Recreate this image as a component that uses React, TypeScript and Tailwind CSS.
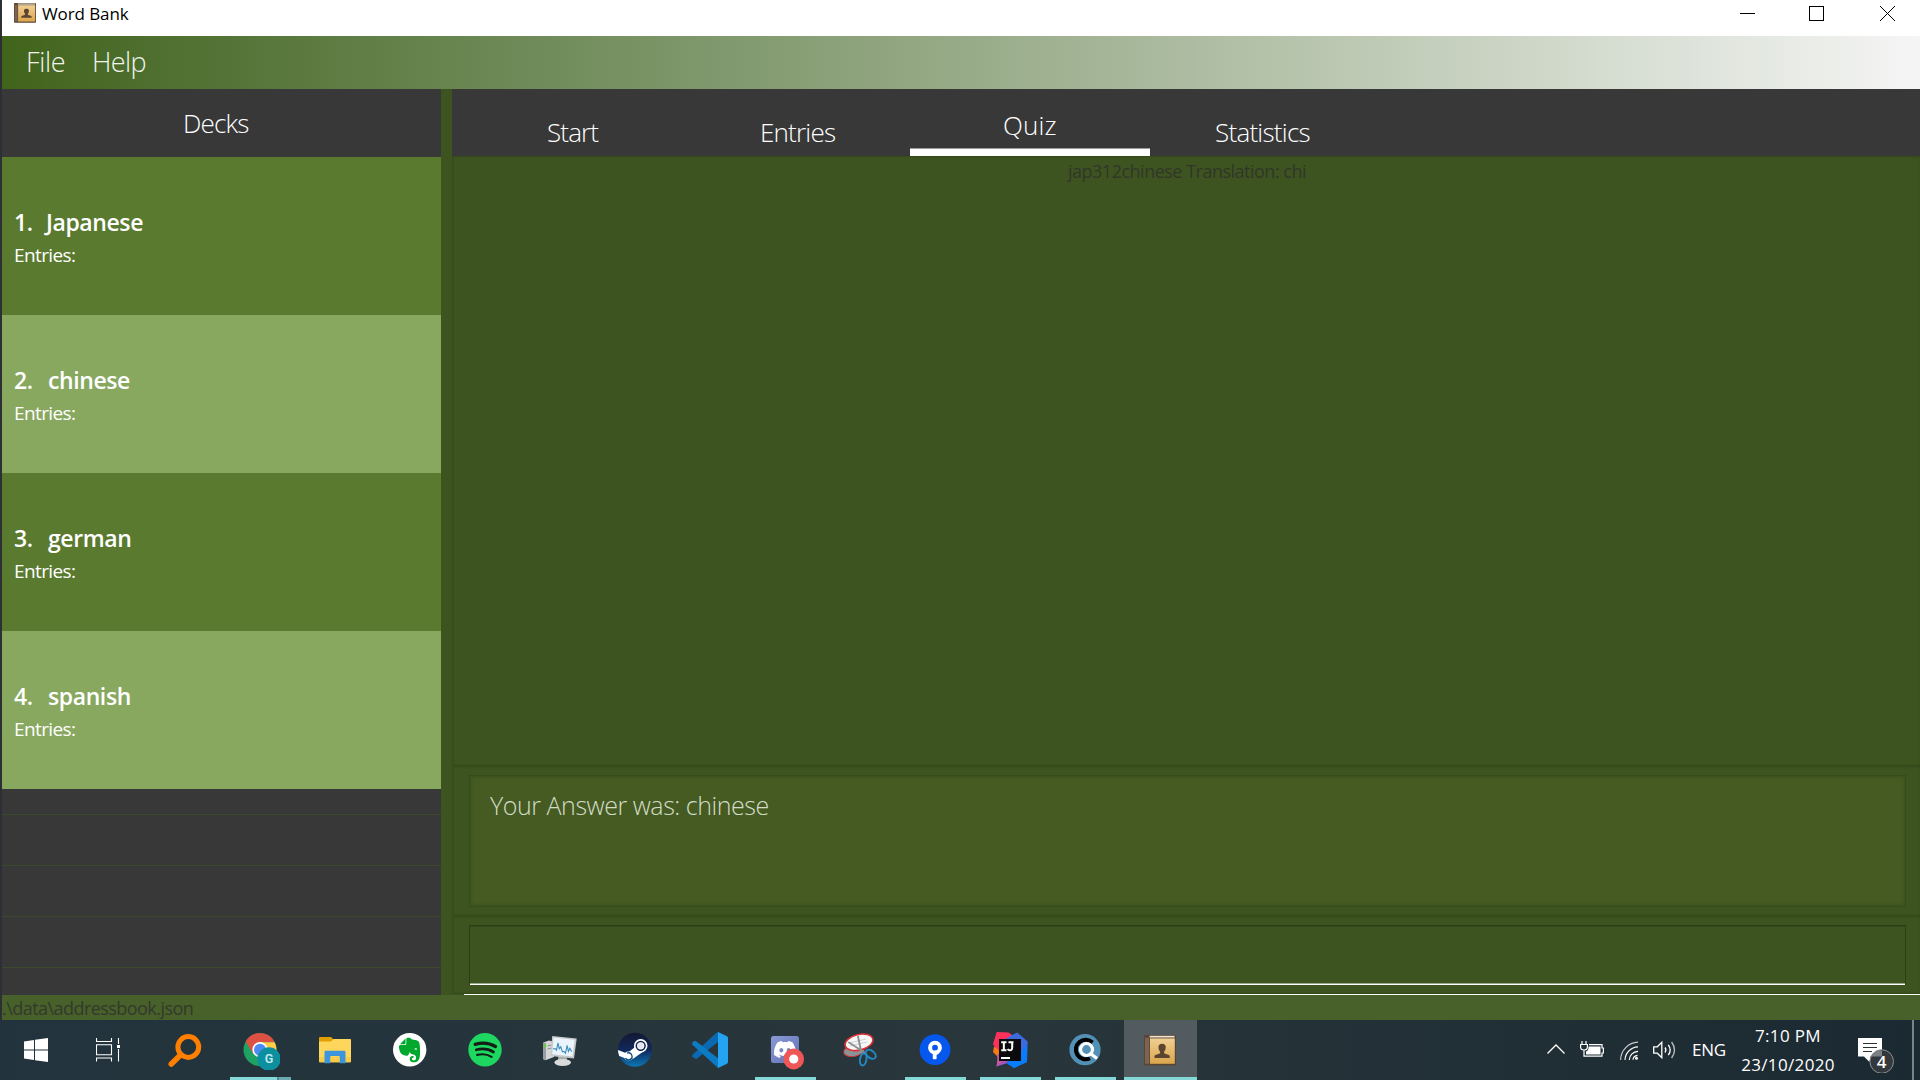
import type { ReactNode } from 'react';
import { SiEvernote, SiDiscord } from 'react-icons/si';

function Book({ className }: { className: string }) {
  return (
    <svg viewBox="4 5 32 31" className={className} preserveAspectRatio="none">
      <defs>
        <linearGradient id="cover" x1="0" y1="0" x2="0" y2="1">
          <stop offset="0" stopColor="#f0cf94" />
          <stop offset="1" stopColor="#dba64c" />
        </linearGradient>
      </defs>
      <rect x="4" y="5" width="32" height="30.5" rx="1.2" fill="#5a4433" />
      <rect x="5" y="7.8" width="4.2" height="26" fill="#7c6450" />
      <rect x="9.6" y="5.8" width="25" height="1.7" fill="#efe6d4" />
      <rect x="10" y="8.4" width="24.8" height="25.4" fill="url(#cover)" />
      <path d="M14.500 28v-2.200c1-1.300 3.400-1.500 5.600-2.600v-1.400c-1.300-1.600-1.800-3.600-1.600-5.100.2-1.900 1.600-2.900 3.600-2.900s3.400 1 3.600 2.900c.2 1.500-.3 3.500-1.600 5.100v1.400c2.200 1.100 4.600 1.300 5.600 2.600V28z" fill="#5b4430" />
    </svg>
  );
}

function Icon({ children }: { children: ReactNode }) {
  return <svg viewBox="0 0 40 40" className="block h-10 w-10 shrink-0">{children}</svg>;
}

const icons: { name: string; running?: boolean; node: ReactNode }[] = [
  {
    name: 'search',
    node: (
      <Icon>
        <path d="M6.300 34 15.500 25" stroke="#ff7f00" strokeWidth="5.600" strokeLinecap="round" />
        <circle cx="23.300" cy="17" r="10.400" fill="none" stroke="#ff7f00" strokeWidth="5" />
      </Icon>
    ),
  },
  {
    name: 'chrome',
    node: (
      <Icon>
        <circle cx="20" cy="19.700" r="16.500" fill="#1da261" />
        <path d="M20 19.700 5.700 11.450A16.500 16.500 0 0 1 34.800 12.200H20z" fill="#dd5144" />
        <path d="M20 12.200h14.700A16.500 16.500 0 0 1 20 36.200l7-12.500z" fill="#ffce44" />
        <path d="M5.700 11.450 13.200 24 20 19.700V12.200z" fill="#dd5144" />
        <circle cx="20" cy="19.700" r="7.600" fill="#fff" />
        <circle cx="20" cy="19.700" r="6" fill="#4c8bf5" />
        <circle cx="29" cy="29" r="11.700" fill="#0c8f9f" />
        <text x="29" y="33.300" textAnchor="middle" fontSize="12.500" fontWeight="600" fill="#c9e9ec" fontFamily="Roboto, sans-serif">G</text>
      </Icon>
    ),
  },
  {
    name: 'explorer',
    node: (
      <Icon>
        <path d="M4 8q0-1 1-1h11l2.500 2.500V13H4z" fill="#e0a004" />
        <path d="M4 11.500h12l2.500-2.500H35.200q.8 0 .8.800V31.500q0 .8-.8.800H4.800q-.8 0-.8-.8z" fill="#ffd65c" />
        <path d="M4 27h32v4.500q0 .8-.8.800H4.800q-.8 0-.8-.8z" fill="#f9cb4a" />
        <path d="M9.500 33.300V22q0-1.300 1.300-1.300h18.400q1.300 0 1.300 1.300v11.300h-5.700V27q0-1-1-1h-7.600q-1 0-1 1v6.300z" fill="#3c96dc" />
      </Icon>
    ),
  },
  {
    name: 'evernote',
    node: (
      <Icon>
        <circle cx="19.700" cy="19.700" r="16.700" fill="#fff" />
        <SiEvernote x="7" y="7.500" size={25} color="#00a82d" />
      </Icon>
    ),
  },
  {
    name: 'spotify',
    node: (
      <Icon>
        <circle cx="20" cy="19.700" r="16.700" fill="#1ed760" />
        <g fill="none" stroke="#121f17" strokeLinecap="round">
          <path d="M10.200 14.300c7-1.900 14.500-1.200 20.300 2.200" strokeWidth="3.300" />
          <path d="M11.300 19.800c6-1.600 12.300-.9 17.200 2.200" strokeWidth="2.700" />
          <path d="M12.200 24.900c5-1.200 10.200-.6 14.400 2" strokeWidth="2.200" />
        </g>
      </Icon>
    ),
  },
  {
    name: 'monitor',
    node: (
      <Icon>
        <path d="M3.300 12.500 9 10.500l5 1.500v15l-8.500 3.200-2.200-1z" fill="#d4d6d6" />
        <path d="M3.300 12.500 6 13.300v16.900l-2.700-1z" fill="#9a9d9f" />
        <path d="M7.500 16l4-1M7.500 19l4-1" stroke="#8d9092" strokeWidth="1" />
        <circle cx="4.800" cy="15.800" r="1.400" fill="#4be01c" />
        <path d="M18.500 26h8l1 6h-10z" fill="#a8abab" />
        <ellipse cx="22.700" cy="32.500" rx="8.300" ry="3.400" fill="#d9dada" />
        <path d="M12.200 6 36.700 8.600 34 28.600 10.500 26z" fill="#c5c9ca" />
        <path d="M13.500 7.500 34.600 9.800 32.500 26.600 12.200 24.300z" fill="#eaf4fa" />
        <path d="m13 19 2.200-.5 1.300 1.700 1.500-7.400 1.300 6 1.500-2 1.600 5 1.600-.5 1.500 2 1.600-8 1.300 6 1.500-3 1.700 3.500" fill="none" stroke="#3c8fc0" strokeWidth="1.100" />
      </Icon>
    ),
  },
  {
    name: 'steam',
    node: (
      <Icon>
        <defs>
          <linearGradient id="steam" x1="0" y1="0" x2="0" y2="1">
            <stop offset="0" stopColor="#141733" />
            <stop offset=".5" stopColor="#10285a" />
            <stop offset="1" stopColor="#0b77b5" />
          </linearGradient>
          <clipPath id="steamClip"><circle cx="20" cy="19.700" r="17" /></clipPath>
        </defs>
        <circle cx="20" cy="19.700" r="17" fill="url(#steam)" />
        <g clipPath="url(#steamClip)">
          <path d="M2 19.500 12 23.500 20 17 29 21 18.500 28.500 12 29 2 25z" fill="#fff" />
          <circle cx="13.500" cy="26" r="4.500" fill="#fff" />
          <path d="M10.500 28.200a3.500 3.500 0 1 0 1.500-5" fill="none" stroke="#0f4a82" strokeWidth="1.300" />
        </g>
        <circle cx="25.700" cy="15.800" r="6.800" fill="#fff" />
        <circle cx="25.700" cy="15.800" r="4.400" fill="#fff" stroke="#13224c" strokeWidth="1.500" />
        <circle cx="25.700" cy="15.800" r="3" fill="#e4e8ee" />
      </Icon>
    ),
  },
  {
    name: 'vscode',
    node: (
      <Icon>
        <path d="M5.800 11.300 29 29V38q-1 0-1.800-.8L2.600 14.800q-1-1.200 0-2.300l1.500-1.200q.8-.6 1.700 0z" fill="#0d7bc4" />
        <path d="M28 2v10L7 28.600q-1 .7-2 0L2.600 27q-1-1 0-2.200L26.200 3q.8-.8 1.800-1z" fill="#0a69b0" />
        <path d="M5.800 11.300 18 20.600 13.200 24.400 2.600 14.800q-1-1.200 0-2.300l1.500-1.200q.8-.6 1.700 0z" fill="#0d7bc4" />
        <path d="M28 2l9 4.300q1 .6 1 1.700v24q0 1.100-1 1.700L28 38z" fill="#23a3f2" />
      </Icon>
    ),
  },
  {
    name: 'discord',
    running: true,
    node: (
      <Icon>
        <defs>
          <linearGradient id="discord" x1="0" y1="0" x2="1" y2="1">
            <stop offset="0" stopColor="#8b9ad6" />
            <stop offset="1" stopColor="#5f70b4" />
          </linearGradient>
        </defs>
        <rect x="6" y="6" width="28" height="27" rx="2.500" fill="url(#discord)" />
        <SiDiscord x="9" y="8.500" size={22} color="#fff" />
        <circle cx="28.700" cy="29" r="10.400" fill="#ef5656" />
        <circle cx="28.700" cy="29" r="4.600" fill="#fff" />
      </Icon>
    ),
  },
  {
    name: 'snip',
    node: (
      <Icon>
        <ellipse cx="14" cy="20.500" rx="10.500" ry="5.800" transform="rotate(-12 14 20.500)" fill="#8e9294" stroke="#c9383c" strokeWidth="1" />
        <ellipse cx="19" cy="12.300" rx="14.200" ry="7.800" transform="rotate(-14 19 12.300)" fill="#f7f7f7" stroke="#dc2f35" strokeWidth="1.600" />
        <path d="M9 13l17-4M10 16l17-4" stroke="#cfd2d4" strokeWidth="1.200" />
        <path d="M9 12.500 24.500 22.500M18 6.500 21.500 23" stroke="#8b9094" strokeWidth="1.900" strokeLinecap="round" />
        <ellipse cx="23.200" cy="29.500" rx="3.200" ry="6" transform="rotate(10 23.200 29.500)" fill="none" stroke="#2389c2" strokeWidth="2" />
        <ellipse cx="30.800" cy="24.300" rx="3.600" ry="5.600" transform="rotate(-52 30.800 24.300)" fill="none" stroke="#2389c2" strokeWidth="2" />
      </Icon>
    ),
  },
  {
    name: 'sourcetree',
    running: true,
    node: (
      <Icon>
        <circle cx="20" cy="19.700" r="15.400" fill="#0557ee" />
        <circle cx="20" cy="17.700" r="4.900" fill="none" stroke="#fff" strokeWidth="4" />
        <path d="M20.500 20.500h3.200v3.300L21.600 25v3.600q0 .7-.7.700h-2.400q-.7 0-.7-.7V24z" fill="#fff" />
      </Icon>
    ),
  },
  {
    name: 'intellij',
    running: true,
    node: (
      <Icon>
        <path d="M6.700 2 18.500 2.500 22 5 20 18 8 22 3 14z" fill="#fe315d" />
        <path d="M4 16.500 9 20v8L3 22z" fill="#f97a12" />
        <path d="M22 5 27.300 2.500 37.700 11.500 37 32 24 38 18 33 14 10z" fill="#3b6bdf" />
        <path d="M37 14v18L24 38l-8-5 12-6z" fill="#087cfa" />
        <path d="M8 24 20 29 16 33.500 6.500 36.500 7.500 30z" fill="#a355c0" />
        <path d="M7 24 14 30 6.500 36.500 7.500 30z" fill="#c8579c" />
        <rect x="9" y="9" width="22" height="22" fill="#0b0b0d" />
        <rect x="11" y="27" width="9" height="2" fill="#fff" />
        <path d="M11.200 12.200h5.300M13.850 12.200v8M11.200 20.200h5.300M18.500 12.200h5M22.200 12.200v5.300q0 2.900-2.500 2.800-1.200 0-2.100-1.300" fill="none" stroke="#fff" strokeWidth="2" />
      </Icon>
    ),
  },
  {
    name: 'quick-search',
    running: true,
    node: (
      <Icon>
        <circle cx="20" cy="19.700" r="15.600" fill="#5290b5" />
        <path d="M27.500 12.500A9.800 9.800 0 1 0 25 28.300" fill="none" stroke="#000" strokeWidth="4" />
        <circle cx="21.500" cy="19.500" r="6" fill="none" stroke="#fff" strokeWidth="3.200" />
        <path d="m25.500 23.500 6.500 5" stroke="#fff" strokeWidth="3.200" />
      </Icon>
    ),
  },
];

const decks = ['Japanese', 'chinese', 'german', 'spanish'];

function TitleBar() {
  return (
    <header className="flex h-9 items-start bg-white">
      <Book className="mt-[3px] ml-3 h-5 w-[22px]" />
      <h1 className="ml-1.5 h-8 flex-1 text-[17px] leading-[28px] tracking-[-0.1px] text-black">Word Bank</h1>
      <svg className="mt-1.5 mr-6 h-4 w-[158px]" viewBox="0 0 158 16" fill="none" stroke="#000" shapeRendering="crispEdges">
        <path d="M2 7.500h15" />
        <path d="M71.500.5h14v14h-14z" />
        <path d="m142 0 15 15m0-15-15 15" shapeRendering="auto" />
      </svg>
    </header>
  );
}

function DeckPanel() {
  return (
    <aside className="flex w-[439px] flex-col bg-[#383838]">
      <h2 className="h-[68px] shrink-0 pl-[181px] text-[26px] leading-[69px] font-light tracking-[-0.8px] text-white">Decks</h2>
      <ul>
        {decks.map((name, i) => (
          <li key={name} className={`h-[158px] pt-[49px] pl-3 text-white ${i % 2 ? 'bg-[#88a860]' : 'bg-[#5a7a30]'}`}>
            <p className="flex h-[33px] text-[23px] leading-8 font-semibold tracking-[-0.4px]">
              <span className={i ? 'w-[34px]' : 'w-8'}>{i + 1}.</span>
              {name}
            </p>
            <p className="h-8 text-[19px] leading-8 tracking-[-0.6px]">Entries:</p>
          </li>
        ))}
      </ul>
      <div className="h-[26px] border-b border-[#3c4a2b]" />
      <div className="h-[51px] border-b border-[#3c4a2b]" />
      <div className="h-[51px] border-b border-[#3c4a2b]" />
      <div className="h-[51px] border-b border-[#3c4a2b]" />
    </aside>
  );
}

function Tabs() {
  return (
    <nav className="flex h-[67px] bg-[#383838] text-[26px] font-light text-white">
      <span className="w-[212px] pt-[25px] pl-[95px] leading-9 tracking-[-0.87px]">Start</span>
      <span className="w-[246px] pt-[25px] pl-24 leading-9 tracking-[-0.8px]">Entries</span>
      <span className="flex w-60 flex-col justify-between pt-[18px]">
        <span className="pl-[93px] leading-9 tracking-[0.1px]">Quiz</span>
        <span className="h-2 border-t border-[#9c9c9c] bg-white" />
      </span>
      <span className="pt-[25px] pl-[65px] leading-9 tracking-[-0.75px]">Statistics</span>
    </nav>
  );
}

function QuizPanel() {
  return (
    <main className="flex flex-1 flex-col">
      <Tabs />
      <section className="h-[610px] border-y border-l border-[#344b1c] pl-[615px] text-[18px] leading-[28px] tracking-[-0.5px] text-[#303729] shadow-[inset_0_0_2px_#344b1c]">
        jap312chinese Translation: chi
      </section>
      <section className="h-[150px] border-y border-l border-[#344b1c] pt-2 pr-3.5 pl-4 shadow-[inset_0_0_2px_#344b1c]">
        <div className="h-[132px] border border-[#344b1c] bg-[#455b21] pt-[14px] pl-5 text-[25px] leading-[30px] font-light tracking-[-0.46px] text-[#d3dcc8] shadow-[inset_0_0_3px_1px_#3a5020]">
          Your Answer was: chinese
        </div>
      </section>
      <section className="h-[78px] border-y border-l border-[#344b1c] pt-2 pr-3.5 pl-4 shadow-[inset_0_0_2px_#344b1c]">
        <div className="flex h-[60px] flex-col justify-end border border-b-0 border-[#2a4014] shadow-[inset_0_1px_0_#324919]">
          <div className="h-0.5 border-t border-[#9aa78c] bg-white" />
        </div>
      </section>
      <div className="ml-3 h-px bg-white" />
    </main>
  );
}

function Tray() {
  return (
    <div className="flex h-full w-[373px] items-start text-white">
      <svg className="mt-6 h-[10px] w-[18px] shrink-0" viewBox="0 0 18 10" fill="none" stroke="#fff" strokeWidth="1.300"><path d="m.5 9.500 8.500-8.500 8.500 8.500" /></svg>
      <svg className="mt-[21px] ml-[15px] h-4 w-6 shrink-0" viewBox="0 0 24 16" fill="none" stroke="#fff" strokeWidth="1.200">
        <path d="M2 0v3m4-3v3M.6 3.500h6.800v2.500q0 3-3.400 3t-3.400-3zM4 9v6.200h18V12h1.400V7H22V3.700H9" />
        <path d="M8.500 5.500H20.500v8H6v-3q2-.7 2.500-3z" fill="#fff" stroke="none" />
      </svg>
      <svg className="mt-[21px] ml-4 h-[19px] w-[19px] shrink-0" viewBox="0 0 19 19" fill="none" stroke="#fff" strokeWidth="1.200">
        <path d="M.6 19A18 18 0 0 1 18 1.200" opacity=".75" />
        <path d="M5 19A13.500 13.500 0 0 1 18 5.800M9.300 19A9 9 0 0 1 18 10.300M13 18.800a5 5 0 0 1 4.500-4.500" />
        <circle cx="16.500" cy="17.300" r="1.500" fill="#fff" stroke="none" />
      </svg>
      <svg className="mt-5 ml-3.5 h-5 w-6 shrink-0" viewBox="0 0 24 20" fill="none" stroke="#fff" strokeWidth="1.300">
        <path d="M.7 6.800h3.600l4.500-4.500v15.400l-4.500-4.500H.7z" />
        <path d="M12 7.500q1.800 2.500 0 5M15.300 4.800q3.800 5.200 0 10.400" />
        <path d="M18.600 2q5.800 8 0 16" opacity=".7" />
      </svg>
      <span className="ml-[15px] w-12 text-[17px] leading-[60px] tracking-[-0.3px]">ENG</span>
      <div className="flex w-[96px] flex-col items-center pt-[2px] text-[17px] leading-[28.500px] tracking-[0.35px]">
        <span>7:10 PM</span>
        <span>23/10/2020</span>
      </div>
      <svg className="mt-[17px] ml-[22px] h-9 w-9 shrink-0" viewBox="0 0 36 36">
        <path d="M0 1h24v18.500H12.500L11.500 25 6 19.500H0z" fill="#fff" />
        <path d="M5 6.500h14M5 10.500h14M5 14.500h9" stroke="#27343a" strokeWidth="1.100" />
        <circle cx="23.700" cy="24.500" r="11.800" fill="#33383c" stroke="#8b8f92" strokeWidth="1" />
        <path d="M12.500 22a11.300 11.300 0 0 1 11.200-8.800h.3v6.300H12.500z" fill="#7d8082" />
        <text x="23.700" y="30.500" textAnchor="middle" fontSize="17" fontWeight="600" fill="#fff" fontFamily="Open Sans, sans-serif">4</text>
      </svg>
      <div className="ml-[18px] h-full w-0.5 bg-[#7a8286]" />
    </div>
  );
}

function Taskbar() {
  return (
    <footer className="flex h-[60px] bg-linear-to-r from-[#22333d] via-[#29363b] to-[#1b2932]">
      <div className="flex w-[72px] items-center pl-6">
        <svg viewBox="0 0 24 24" className="h-6 w-6" fill="#fff"><path d="M0 3.400 10 2v9.400H0zM11 1.800 24 0v11.400H11zM0 12.400h10V22L0 20.600zM11 12.400h13V24l-13-1.800z" /></svg>
      </div>
      <div className="flex w-[76px] items-center pl-6">
        <svg viewBox="0 0 24 24" className="h-6 w-6" fill="none" stroke="#fff" strokeWidth="1.100">
          <path d="M.5 0v3.500h15V0M.5 6.700h15v10.100H.5zM.5 23.500V20h15v3.500M22.500 0v6M22.500 11v12.500" />
          <path d="M21 7h3v3h-3z" fill="#fff" stroke="none" />
        </svg>
      </div>
      {icons.map(({ name, running, node }) => (
        <div key={name} className="flex h-[60px] w-[75px] flex-col justify-between pt-2.5 pr-[7px] pl-[7px]">
          <div className="pl-2.5">{node}</div>
          {running && <div className="h-[3px] bg-[#85d8d8]" />}
          {name === 'chrome' && (
            <div className="flex h-[3px]">
              <div className="w-[47px] bg-[#85d8d8]" />
              <div className="w-0.5 bg-[#4f8a8e]" />
              <div className="w-3 bg-[#69abae]" />
            </div>
          )}
        </div>
      ))}
      <div className="ml-px flex w-[73px] flex-col justify-between bg-[#525b60] pt-[15px]">
        <Book className="ml-5 h-[31px] w-8" />
        <div className="h-[3px] bg-[#85d8d8]" />
      </div>
      <div className="flex-1" />
      <Tray />
    </footer>
  );
}

export default function App() {
  return (
    <div className="h-[1080px] w-[1920px] overflow-hidden font-['Open_Sans',sans-serif] whitespace-nowrap">
      <div className="flex h-[1020px] flex-col border-l-2 border-[#2c3035]">
        <TitleBar />
        <nav className="flex h-[53px] bg-linear-to-r from-[#41641b] to-[#f5f5f5] pl-6 text-[27px] leading-[52px] font-light text-[#f0f4ec]">
          <span className="w-[66px] tracking-[-0.3px]">File</span>
          <span className="tracking-[-0.6px]">Help</span>
        </nav>
        <div className="flex h-[906px] bg-[#3e5420]">
          <DeckPanel />
          <div className="w-[11px]" />
          <QuizPanel />
        </div>
        <div className="h-[25px] bg-[#486029] text-[18px] leading-[27px] tracking-[-0.55px] text-[#323a2c]">.\data\addressbook.json</div>
      </div>
      <Taskbar />
    </div>
  );
}
